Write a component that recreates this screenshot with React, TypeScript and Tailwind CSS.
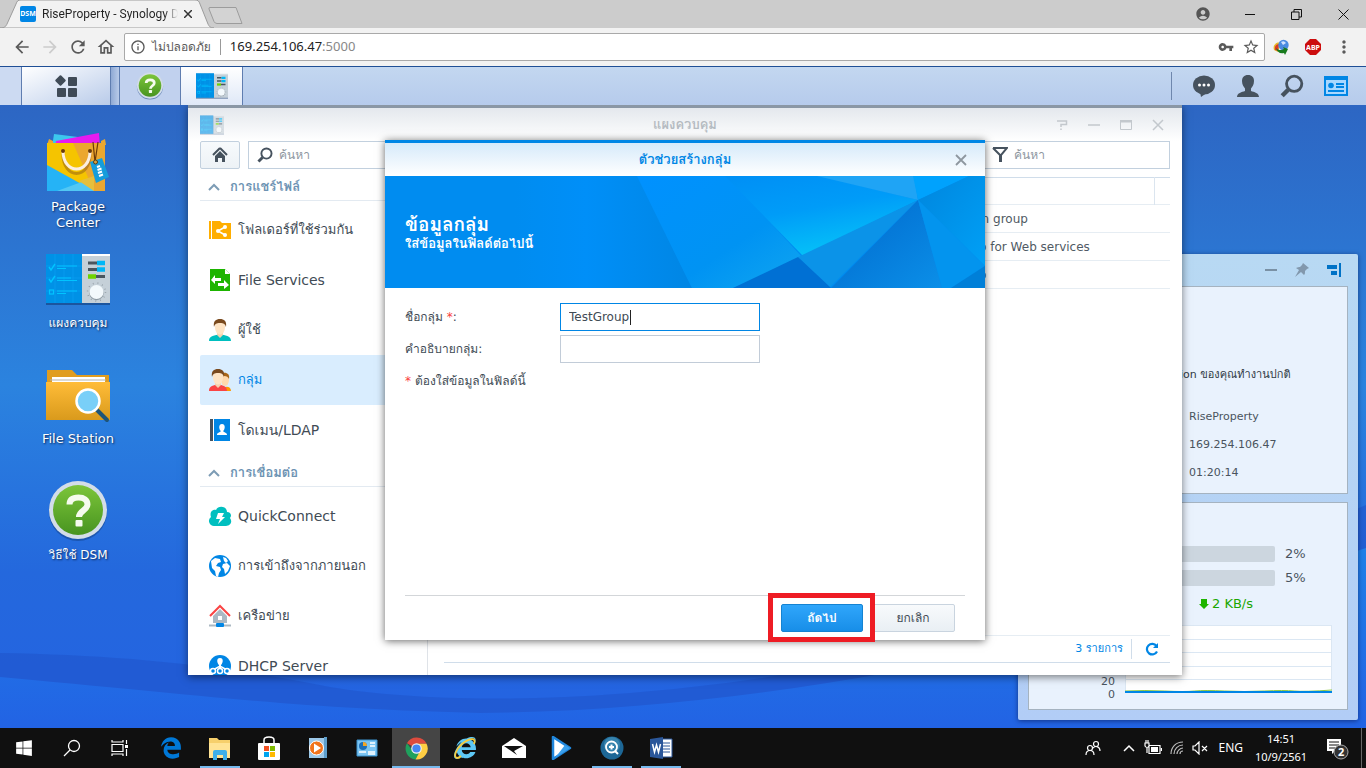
import type { ReactNode } from 'react'
import { FaEdgeLegacy, FaInternetExplorer, FaWindows } from 'react-icons/fa'
import {
  MdAccountCircle,
  MdArrowBack,
  MdArrowForward,
  MdInfoOutline,
  MdMoreVert,
  MdOutlineHome,
  MdRefresh,
  MdStarBorder,
  MdVpnKey,
} from 'react-icons/md'

/* ---------- shared drawings ---------- */

function ControlPanelIcon({ className }: { className: string }) {
  return (
    <svg viewBox="0 0 64 51" className={className} aria-hidden>
      <rect y="1" width="64" height="50" fill="#0b2f66" opacity="0.5" />
      <rect width="36" height="49" fill="#0091e6" />
      <path d="M9 0v49M18 0v49M27 0v49M0 12h36M0 24h36M0 37h36" stroke="#0aa3f5" strokeWidth="0.6" />
      <rect x="36" width="28" height="49" fill="#c5d0d8" />
      <rect x="36" width="28" height="2" fill="#fff" />
      <path d="M3 13l2 3 4-6M3 25l2 3 4-6" stroke="#00c4ff" strokeWidth="1.4" fill="none" />
      <rect x="3.500" y="36" width="4" height="4" stroke="#00c4ff" strokeWidth="1.2" fill="none" />
      <path d="M11 12h20M11 14.500h9M11 24h14M11 26.500h20M11 37h20M11 39.500h9" stroke="#00c4ff" strokeWidth="1.1" />
      <path d="M42 9h9M42 15.500h9M50 22.500h9" stroke="#4b565f" strokeWidth="3" />
      <path d="M51 9h8M51 15.500h8" stroke="#00b7f7" strokeWidth="4.500" />
      <path d="M42 22.500h8" stroke="#6fd300" strokeWidth="4.500" />
      <circle cx="50.500" cy="38" r="9" fill="none" stroke="#909ba3" strokeWidth="1.500" strokeDasharray="0.8 4" />
      <circle cx="50.500" cy="39" r="7.200" fill="#8d99a2" />
      <circle cx="50.500" cy="38" r="7" fill="#f3f9fc" />
    </svg>
  )
}

function HelpIcon({ className }: { className: string }) {
  return (
    <svg viewBox="0 0 60 62" className={className} aria-hidden>
      <defs>
        <linearGradient id="help-green" x1="0" y1="0" x2="0" y2="1">
          <stop offset="0" stopColor="#7cc53a" />
          <stop offset="1" stopColor="#489420" />
        </linearGradient>
      </defs>
      <circle cx="30" cy="32" r="29" fill="#123f86" opacity="0.5" />
      <circle cx="30" cy="30" r="29" fill="#d3dde8" />
      <circle cx="30" cy="30" r="25" fill="url(#help-green)" />
      <path d="M21.500 24.500c0-5 3.500-7 9-7s9 2.500 9 7c0 6-8.500 6-8.500 12.500" fill="none" stroke="#f6fbee" strokeWidth="6" />
      <rect x="27.500" y="40" width="7" height="6.500" rx="1" fill="#f6fbee" />
    </svg>
  )
}

function PackageCenterIcon() {
  return (
    <svg viewBox="0 0 62 60" className="h-[60px] w-[62px]" aria-hidden>
      <path d="M7 1l24 3v10H5z" fill="#3cc8ee" />
      <path d="M9 8l43-8 1 14H8z" fill="#e61af0" />
      <path d="M2 6l4 2v4H0zM58 6l-4 2v4h5z" fill="#e9a832" />
      <rect y="10" width="58" height="48" fill="#f5c400" />
      <path d="M26 10h32v48H47z" fill="#eba72f" />
      <path d="M0 32l47 26H0z" fill="#25b3f6" />
      <path d="M10 58l30-11 7 11z" fill="#52c8f4" />
      <path d="M32 48l15-5v15z" fill="#e6bf3c" />
      <path d="M16 18c0 26 27 26 27 0" fill="none" stroke="#8b5a16" strokeWidth="3" opacity="0.5" transform="translate(0 3)" />
      <path d="M16 18c0 24 27 24 27 0" fill="none" stroke="#fbeee0" strokeWidth="3" />
      <circle cx="16" cy="18" r="2" fill="#6b3a08" />
      <circle cx="43" cy="18" r="2" fill="#6b3a08" />
      <path d="M46 9l2 20 3-20" fill="none" stroke="#6b3a08" strokeWidth="1.200" />
      <path d="M43 29l12-4 7 19-13 6z" fill="#159ddb" />
      <circle cx="48.500" cy="29" r="2" fill="#d7a33f" stroke="#5c3a10" />
      <path d="M50 34l3-1M50.500 37l4-1.500M51 40l4-1.500M52 43l4-1.500" stroke="#fff" strokeWidth="2" />
    </svg>
  )
}

function FileStationIcon() {
  return (
    <svg viewBox="0 0 64 54" className="mt-1 h-[54px] w-[64px]" aria-hidden>
      <defs>
        <linearGradient id="folder" x1="0" y1="0" x2="0" y2="1">
          <stop offset="0" stopColor="#ffbc38" />
          <stop offset="1" stopColor="#d99a1c" />
        </linearGradient>
      </defs>
      <path d="M1 0h25l5 5h32v20H1z" fill="#e09d20" />
      <rect x="6" y="7" width="53" height="8" fill="#fff" />
      <path d="M4 10h56" stroke="#b7b3aa" />
      <rect y="12" width="64" height="38" fill="url(#folder)" />
      <path d="M50 39l11 11" stroke="#1f5577" strokeWidth="4" strokeLinecap="round" />
      <circle cx="42" cy="31" r="11.500" fill="#79cff8" stroke="#fff" strokeWidth="2.500" />
    </svg>
  )
}

function Magnifier({ className }: { className: string }) {
  return (
    <svg viewBox="0 0 22 22" className={className} fill="none" stroke="currentColor" aria-hidden>
      <circle cx="13" cy="9" r="7" strokeWidth="2.600" />
      <path d="M7.500 14.500L2 20" strokeWidth="4" />
    </svg>
  )
}

function ChevronUp() {
  return (
    <svg viewBox="0 0 12 8" className="h-2 w-3" fill="none" stroke="#7d9cb5" strokeWidth="2" aria-hidden>
      <path d="M1 7l5-5 5 5" />
    </svg>
  )
}

/* ---------- browser ---------- */

function Browser() {
  return (
    <header className="shrink-0 font-['Noto_Sans','Waree','Loma','Noto_Sans_Thai_Looped','Noto_Sans_Thai',sans-serif]">
      <div className="flex h-7 bg-[#ccc]">
        <div className="relative flex h-7 w-[214px] items-center gap-[6px] pl-5 pr-[18px]">
          <svg viewBox="0 0 214 28" className="absolute inset-0 h-7 w-[214px]" aria-hidden>
            <path d="M0 28C5 28 6 26 7 24L16 4c1-3 2-4 5-4h174c3 0 4 1 5 4l8 20c1 2 2 4 6 4z" fill="#f2f2f2" stroke="#9c9c9c" />
          </svg>
          <span className="relative flex h-4 w-4 items-center justify-center rounded-xs bg-[#0086e6] text-[7px] font-bold text-white">DSM</span>
          <span className="relative w-[136px] overflow-hidden whitespace-nowrap bg-gradient-to-r from-[#222] from-90% to-transparent bg-clip-text font-['Roboto',sans-serif] text-xs text-transparent">
            RiseProperty - Synology D
          </span>
          <button className="relative" aria-label="Close tab">
            <svg viewBox="0 0 8 8" className="h-2 w-2" stroke="#333" strokeWidth="1.500"><path d="M0 0l8 8M8 0l-8 8" /></svg>
          </button>
        </div>
        <button aria-label="New tab" className="mt-[7px] ml-[-6px] h-[17px]">
          <svg viewBox="0 0 36 18" className="h-[18px] w-9"><path d="M2 .5h26l6 16H9q-2 0-3-2L1 2Q.5.500 2 .5z" fill="#d3d3d3" stroke="#9c9c9c" /></svg>
        </button>
        <div className="ml-auto flex items-center pr-[17px] text-[#111]">
          <MdAccountCircle className="mr-[34px] h-4 w-4 text-[#555]" />
          <button aria-label="Minimize" className="mr-9 flex h-[11px] w-[10px] items-center"><span className="h-px w-full bg-[#111]" /></button>
          <button aria-label="Restore" className="mr-9">
            <svg viewBox="0 0 11 11" className="h-[11px] w-[11px]" fill="none" stroke="currentColor"><path d="M.5 3h7.500v7.500H.5zM3 3V.5h7.500V8H8" /></svg>
          </button>
          <button aria-label="Close">
            <svg viewBox="0 0 11 11" className="h-[11px] w-[11px]" fill="none" stroke="currentColor"><path d="M.5.5l10 10M10.500.5l-10 10" /></svg>
          </button>
        </div>
      </div>
      <div className="flex h-[38px] items-center bg-[#f2f2f2] pl-3 pr-3 text-[#5a5a5a]">
        <button aria-label="Back" className="mr-2"><MdArrowBack className="h-5 w-5" /></button>
        <button aria-label="Forward" className="mr-2 text-[#ccc]"><MdArrowForward className="h-5 w-5" /></button>
        <button aria-label="Reload" className="mr-2"><MdRefresh className="h-5 w-5" /></button>
        <button aria-label="Home" className="mr-2"><MdOutlineHome className="h-5 w-5" /></button>
        <div className="flex h-7 flex-1 items-center rounded-xs border border-[#a9a9a9] bg-white px-[5px]">
          <MdInfoOutline className="mr-[6px] h-4 w-4" />
          <span className="text-xs">ไม่ปลอดภัย</span>
          <span className="mx-[9px] h-4 w-px bg-[#999]" />
          <span className="flex-1 text-[13px] text-[#888]"><span className="text-[#222]">169.254.106.47</span>:5000</span>
          <MdVpnKey className="mr-2 h-4 w-4" />
          <MdStarBorder className="-mr-px h-[18px] w-[18px]" />
        </div>
        <svg viewBox="0 0 16 16" className="ml-2 h-4 w-4" aria-hidden>
          <path d="M1 11C-1 5 5 2 8 4l-3 9z" fill="#e8b82a" />
          <path d="M2 11c-1-4 2-6 4-6L5 12z" fill="#d93a28" />
          <circle cx="10.500" cy="6" r="5.200" fill="#4a8be0" />
          <path d="M8 3c3-2 4 0 5 1l-3 2z" fill="#cfe2ff" />
          <path d="M3 9c3 3 6 2 8 1l-1-2 5 2-3 6-1-2c-4 1-7-1-8-5z" fill="#177a1c" />
        </svg>
        <svg viewBox="0 0 16 16" className="ml-4 h-4 w-4" aria-hidden>
          <path d="M5 0h6l5 5v6l-5 5H5l-5-5V5z" fill="#cc0d0d" />
          <text x="8" y="10.500" fontSize="7" fontWeight="bold" fill="#fff" textAnchor="middle">ABP</text>
        </svg>
        <button aria-label="Menu" className="ml-[13px]"><MdMoreVert className="h-5 w-5" /></button>
      </div>
    </header>
  )
}

/* ---------- DSM top bar ---------- */

function TopBar() {
  return (
    <nav className="flex h-[39px] shrink-0 items-stretch border-t border-[#1f4f96] bg-gradient-to-b from-[#c3d7f0] to-[#b6cbec] text-[#46525e]">
      <div className="w-[21px] bg-[#ccdaf2]" />
      <button aria-label="Main menu" className="flex w-[90px] items-center justify-center border-x border-[#5f7db0] bg-gradient-to-br from-white to-[#b9cbe9]">
        <svg viewBox="0 0 24 24" className="h-6 w-6" fill="#404b57">
          <rect x="2.500" y="2.500" width="8" height="8" rx="1" transform="rotate(45 6.500 6.500)" />
          <rect x="14" y="3" width="9" height="9" rx="1" />
          <rect x="3" y="14" width="9" height="9" rx="1" />
          <rect x="14" y="14" width="9" height="9" rx="1" />
        </svg>
      </button>
      <div className="w-2 bg-gradient-to-r from-[#8fa9d4] to-[#b9cbe9]" />
      <button aria-label="DSM Help" className="flex w-[62px] items-center justify-center border-x border-[#5f7db0] bg-[#c1d1ee]">
        <HelpIcon className="h-7 w-7" />
      </button>
      <button aria-label="แผงควบคุม" className="flex w-[62px] items-center justify-center border-r border-[#5f7db0] bg-gradient-to-b from-white to-[#dfe8f7]">
        <ControlPanelIcon className="h-[26px] w-8" />
      </button>
      <div className="ml-auto flex items-center gap-5 pr-[18px]">
        <span className="h-7 w-px bg-[#6f87ad]" />
        <button aria-label="Notifications">
          <svg viewBox="0 0 24 24" className="h-6 w-6" fill="#46525e">
            <ellipse cx="12" cy="11" rx="11" ry="9.500" />
            <path d="M8 18h8l-7 5z" />
            <g fill="#fff"><circle cx="7.500" cy="11" r="1.500" /><circle cx="12" cy="11" r="1.500" /><circle cx="16.500" cy="11" r="1.500" /></g>
          </svg>
        </button>
        <button aria-label="Options">
          <svg viewBox="0 0 24 24" className="h-6 w-6" fill="#46525e"><path d="M12 1c4 0 6 2.500 6 6 0 4-2 6-3 7.500V17c3 1 8 2 8 6H1c0-4 5-5 8-6v-2.500C8 13 6 11 6 7c0-3.500 2-6 6-6z" /></svg>
        </button>
        <button aria-label="Search"><Magnifier className="h-6 w-6" /></button>
        <button aria-label="Widgets">
          <svg viewBox="0 0 24 24" className="h-6 w-6">
            <path d="M1 3h22v18H1z" fill="#a9d8ff" stroke="#0086e5" strokeWidth="2" />
            <path d="M0 2h24v4H0z" fill="#0086e5" />
            <circle cx="7" cy="11.500" r="2.800" fill="#0086e5" />
            <path d="M12 10h8M12 13h8M4 17h16" stroke="#0086e5" strokeWidth="1.800" />
          </svg>
        </button>
      </div>
    </nav>
  )
}

/* ---------- desktop ---------- */

function Shortcut({ icon, label, latin }: { icon: ReactNode; label: string; latin?: boolean }) {
  return (
    <button className="flex h-[116px] w-24 flex-col items-center text-white [text-shadow:1px_1px_2px_#0b2550]">
      <span className="flex h-16 items-center">{icon}</span>
      <span className={`mt-1 whitespace-pre-line text-center leading-4 ${latin ? 'text-[13px]' : 'text-xs leading-4'}`}>{label}</span>
    </button>
  )
}

function Wallpaper() {
  return (
    <svg viewBox="0 0 1366 623" preserveAspectRatio="none" className="absolute inset-0 h-full w-full" aria-hidden>
      <defs>
        <linearGradient id="sky" x1="0" y1="0" x2="0" y2="1">
          <stop offset="0" stopColor="#2d66c3" />
          <stop offset="0.450" stopColor="#2b83df" />
          <stop offset="0.750" stopColor="#2468dd" />
          <stop offset="1" stopColor="#2463e2" />
        </linearGradient>
        <linearGradient id="wave2" x1="0" y1="0" x2="0" y2="1">
          <stop offset="0" stopColor="#2080e8" />
          <stop offset="1" stopColor="#2263e4" />
        </linearGradient>
      </defs>
      <rect width="1366" height="623" fill="url(#sky)" />
      <path d="M0 548C120 550 220 560 330 582C500 610 900 600 1366 400V623H0z" fill="#1f55cc" opacity="0.600" />
      <path d="M0 572C200 590 300 604 480 608C800 605 1100 530 1366 443V623H0z" fill="url(#wave2)" />
    </svg>
  )
}

/* ---------- control panel window ---------- */

type Item = { label: string; icon: ReactNode; active?: boolean; latin?: boolean }

const sharing: Item[] = [
  {
    label: 'โฟลเดอร์ที่ใช้ร่วมกัน',
    icon: <><path d="M1 3h2v18H1zM4 3h8l2 2h9v16H4z" fill="#ffae00" /><path d="M17 9l-7 4 7 4" stroke="#fff" fill="none" strokeWidth="1.500" /><g fill="#fff"><circle cx="17" cy="9" r="2" /><circle cx="10" cy="13" r="2" /><circle cx="17" cy="17" r="2" /></g></>,
  },
  {
    label: 'File Services',
    latin: true,
    icon: <><path d="M2 1h15l5 5v17H2z" fill="#1db400" /><path d="M17 1v5h5z" fill="#fff" /><path d="M13 10H7V7l-4 5 4 4v-3h6zM10 15h6v-3l5 5-5 4v-3h-6z" fill="#fff" /></>,
  },
  {
    label: 'ผู้ใช้',
    icon: <><path d="M1 23c0-6 6-5 11-7 5 2 11 1 11 7z" fill="#00bfbf" /><path d="M9 13h6v4l-3 3-3-3z" fill="#f5d4b0" /><ellipse cx="12" cy="9.500" rx="5" ry="7" fill="#ffe4c4" /><path d="M6 9C5 3 8 1 12 1s7 2 6 8c-1-3-2-4-6-4S7 6 6 9z" fill="#7a4a1e" /></>,
  },
  {
    label: 'กลุ่ม',
    active: true,
    icon: <><path d="M13 23c3-6 10-5 10 0z" fill="#ff9800" /><ellipse cx="17" cy="12" rx="4" ry="6" fill="#ffd9ad" /><path d="M14 5c5-1 8 1 7 6-1-2-2-3-5-3z" fill="#a86518" /><path d="M1 23c0-6 5-5 9-7 4 2 9 1 9 7z" fill="#fa4444" /><path d="M7 13h6v4l-3 3-3-3z" fill="#f5d4b0" /><ellipse cx="10" cy="9.500" rx="5" ry="7" fill="#ffe4c4" /><path d="M4 9C3 3 6 1 10 1s7 2 6 8c-1-3-2-4-6-4S5 6 4 9z" fill="#7a4a1e" /></>,
  },
  {
    label: 'โดเมน/LDAP',
    latin: true,
    icon: <><path d="M2 1h3v22H2z" fill="#46525e" /><path d="M6 1h16v22H6z" fill="#0086e5" /><path d="M14 6c4 0 3 6 1 7 1 2 4 1 4 4H9c0-3 3-2 4-4-2-1-3-7 1-7z" fill="#fff" /></>,
  },
]

const connectivity: Item[] = [
  {
    label: 'QuickConnect',
    latin: true,
    icon: <><path d="M6 22a5 5 0 01-3-9C1 7 6 5 8 6c2-5 11-4 11 2 4 0 5 4 3 6 3 4 0 8-4 8z" fill="#00bfbf" /><path d="M10 9h6l-2 4h3l-7 7 2-5H8z" fill="#fff" /></>,
  },
  {
    label: 'การเข้าถึงจากภายนอก',
    icon: <><circle cx="12" cy="12" r="11" fill="#0086e5" /><path d="M3 7l4-3 5 1 1 3-3 1-2 3 4 1 1 3-2 3-1 4-2-1-1-5-3-3zM15 3l3 1 2 3-2 2-2-2zM15 10l4-1 3 3-2 5-3 3-1-5-2-2z" fill="#fff" /></>,
  },
  {
    label: 'เครือข่าย',
    icon: <><path d="M5 12l7-7 7 7v7H5z" fill="#abb8c3" /><path d="M10 12h4v4h-4z" fill="#fff" /><path d="M2 12L12 2l10 10" stroke="#fa4444" strokeWidth="2" fill="none" /><path d="M1 21.500h22" stroke="#abb8c3" strokeWidth="2" /><rect x="8" y="19" width="8" height="4" rx="1" fill="#0086e5" /></>,
  },
  {
    label: 'DHCP Server',
    latin: true,
    icon: <><circle cx="12" cy="12" r="11" fill="#0086e5" /><path d="M12 4c4 0 3 5 1 7v4h-2v-4c-2-2-3-7 1-7z" fill="#fff" /><path d="M5 16l7-4 7 4" stroke="#fff" fill="none" strokeWidth="1.500" /><g fill="#0086e5" stroke="#fff" strokeWidth="1.500"><circle cx="5" cy="17" r="2.500" /><circle cx="12" cy="17" r="2.500" /><circle cx="19" cy="17" r="2.500" /></g></>,
  },
]

function Section({ title, items }: { title: string; items: Item[] }) {
  return (
    <section>
      <button className="mb-1 flex h-8 w-full items-center gap-[10px] border-b border-[#e3eaf1] pt-1 pl-2 text-[13px] font-bold text-[#6d93b3]">
        <ChevronUp />
        {title}
      </button>
      <ul>
        {items.map((item) => (
          <li key={item.label}>
            <a
              href="#"
              className={`flex h-[50px] items-center gap-[6px] rounded-xs pl-2 whitespace-nowrap ${item.latin ? 'text-sm' : 'text-[13px]'} ${item.active ? 'bg-[#d9edfe] text-[#0086e5]' : 'text-[#414b55]'}`}
            >
              <svg viewBox="0 0 24 24" className="h-6 w-6 shrink-0" aria-hidden>{item.icon}</svg>
              {item.label}
            </a>
          </li>
        ))}
      </ul>
    </section>
  )
}

const groups = [
  ['administrators', 'System default admin group'],
  ['http', 'System default group for Web services'],
  ['users', 'System default group'],
]

function ControlPanel() {
  return (
    <section className="absolute top-0 right-[184px] bottom-[53px] left-[188px] border-t-[3px] border-[#8a97a5] bg-white shadow-[0_2px_8px_rgba(0,0,0,0.5)]">
      <div className="flex h-full flex-col">
        <div className="flex h-[33px] shrink-0 items-center bg-gradient-to-b from-[#e4e8ed] to-white pr-[18px] pl-3 text-[#c3c8cd]">
          <ControlPanelIcon className="h-5 w-6 opacity-60" />
          <h2 className="ml-[90px] flex-1 text-center text-[13px] font-bold text-[#b5bbc1]">แผงควบคุม</h2>
          <div className="flex items-center gap-5">
            <button aria-label="Help"><svg viewBox="0 0 12 12" className="h-3 w-3" fill="none" stroke="currentColor" strokeWidth="1.500"><path d="M1 2h9.500v3.500H5V8M5 9.500V11" /></svg></button>
            <button aria-label="Minimize"><svg viewBox="0 0 12 12" className="h-3 w-3" stroke="currentColor" strokeWidth="1.500"><path d="M0 6h12" /></svg></button>
            <button aria-label="Maximize"><svg viewBox="0 0 12 12" className="h-3 w-3" fill="none" stroke="currentColor"><path d="M.5 1.500h11v9H.5zM0 3h12" /><path d="M0 2h12" strokeWidth="2" /></svg></button>
            <button aria-label="Close"><svg viewBox="0 0 12 12" className="h-3 w-3" stroke="currentColor" strokeWidth="1.500"><path d="M1 1l10 10M11 1L1 11" /></svg></button>
          </div>
        </div>

        <div className="flex min-h-0 flex-1">
          <aside className="w-60 shrink-0 overflow-hidden border-r border-[#dfe3e8] pl-3 pr-3">
            <div className="flex gap-2">
              <button aria-label="Home" className="flex h-7 w-10 items-center justify-center rounded-xs border border-[#c2d0de] bg-gradient-to-b from-[#f7fafc] to-[#edf2f6]">
                <svg viewBox="0 0 16 16" className="h-4 w-4"><path d="M8 1L1 8M8 1l7 7" stroke="#46525e" strokeWidth="2" /><path d="M8 4l5 5v6h-3v-4H6v4H3V9z" fill="#46525e" /></svg>
              </button>
              <label className="flex h-7 min-w-0 flex-1 items-center gap-[6px] border border-[#c2d0de] pl-2 text-[#46525e]">
                <Magnifier className="h-4 w-4 shrink-0" />
                <input aria-label="ค้นหา" placeholder="ค้นหา" className="w-full min-w-0 text-xs outline-none placeholder:text-[#8e979f]" />
              </label>
            </div>
            <Section title="การแชร์ไฟล์" items={sharing} />
            <Section title="การเชื่อมต่อ" items={connectivity} />
          </aside>

          <div className="flex min-w-0 flex-1 flex-col pr-3 pb-3 pl-4">
            <label className="ml-auto flex h-7 w-[190px] items-center gap-[6px] border border-[#c2d0de] pl-[11px] text-[#46525e]">
              <svg viewBox="0 0 16 16" className="h-4 w-4 shrink-0" fill="none" stroke="currentColor" strokeWidth="2"><path d="M1 1h14L9 8v7M1 1l7 7v7" /></svg>
              <input aria-label="Filter" placeholder="ค้นหา" className="w-full min-w-0 text-xs outline-none placeholder:text-[#8e979f]" />
            </label>
            <table className="mt-2 w-full border-t border-[#d0ddea] text-left text-xs text-[#505a64]">
              <thead>
                <tr className="h-[27px] border-b border-[#e6edf3] text-[#0086e5]">
                  <th className="w-[413px] pl-2 font-normal">ชื่อ</th>
                  <th className="border-r border-[#dbe5ef] font-normal">คำอธิบาย</th>
                  <th className="w-4" aria-label="Columns" />
                </tr>
              </thead>
              <tbody>
                {groups.map(([name, description]) => (
                  <tr key={name} className="h-7 border-b border-[#e6edf3]">
                    <td className="pl-2">{name}</td>
                    <td colSpan={2} className="whitespace-nowrap">{description}</td>
                  </tr>
                ))}
              </tbody>
            </table>
            <div className="mt-auto flex h-7 items-center justify-end border-t border-b border-t-[#e6edf3] border-b-[#d0ddea] pr-[6px] text-[11px] text-[#0086e5]">
              <span>3 รายการ</span>
              <span className="mx-2 h-5 w-px bg-[#d0ddea]" />
              <button aria-label="Refresh" className="mx-1">
                <svg viewBox="0 0 14 14" className="mx-[1px] h-[14px] w-[14px]" fill="none" stroke="currentColor" strokeWidth="2.200"><path d="M12 9.500a5.300 5.300 0 11-.5-5.500" /><path d="M13 1v5H8z" fill="currentColor" stroke="none" /></svg>
              </button>
            </div>
          </div>
        </div>
      </div>
      <GroupWizard />
    </section>
  )
}

/* ---------- wizard ---------- */

function Banner() {
  return (
    <svg viewBox="0 0 600 112" preserveAspectRatio="none" className="absolute inset-0 h-full w-full" aria-hidden>
      <defs>
        <linearGradient id="b1" x1="0" y1="0" x2="1" y2="1">
          <stop offset="0" stopColor="#0091ff" />
          <stop offset="0.600" stopColor="#0093f3" />
          <stop offset="1" stopColor="#10a6ef" />
        </linearGradient>
        <linearGradient id="b2" x1="0" y1="0" x2="0.400" y2="1">
          <stop offset="0" stopColor="#008ff5" />
          <stop offset="0.500" stopColor="#009cf8" />
          <stop offset="1" stopColor="#05c0f8" />
        </linearGradient>
        <linearGradient id="b3" x1="0" y1="0" x2="1" y2="1">
          <stop offset="0" stopColor="#0068cc" />
          <stop offset="1" stopColor="#0b8fe8" />
        </linearGradient>
        <linearGradient id="b4" x1="0" y1="0" x2="1" y2="1">
          <stop offset="0" stopColor="#0086de" />
          <stop offset="1" stopColor="#00a0f6" />
        </linearGradient>
        <linearGradient id="b5" x1="0" y1="0" x2="1" y2="0">
          <stop offset="0" stopColor="#008cf0" />
          <stop offset="0.400" stopColor="#008ff8" />
          <stop offset="1" stopColor="#0086e4" />
        </linearGradient>
      </defs>
      <rect width="600" height="112" fill="#008cf0" />
      <path d="M130 0h122l55 112H130z" fill="url(#b5)" />
      <path d="M252 0h90l76 82-70 30h-41z" fill="url(#b1)" />
      <path d="M340 0h95l98 24-115 56z" fill="url(#b2)" />
      <path d="M432 0h97l4 24z" fill="#1fa4f5" />
      <path d="M528 0h56l-51 24z" fill="#00a2fd" />
      <path d="M584 0h16v90l-67-66z" fill="url(#b4)" />
      <path d="M533 24L413 81l31 31z" fill="#0b93e8" />
      <path d="M348 112l65-31 33 31z" fill="#0070d4" />
      <path d="M533 24l-87 88h111z" fill="url(#b3)" />
      <path d="M533 24l67 66-34 22h-9z" fill="#0394ee" />
      <path d="M600 90v22h-34z" fill="#007fd8" />
    </svg>
  )
}

function GroupWizard() {
  return (
    <form className="absolute top-8 left-1/2 flex h-[500px] w-[600px] -translate-x-1/2 flex-col border-t-[3px] border-[#0086e5] bg-white text-xs text-[#414b55] shadow-[0_1px_8px_rgba(0,0,0,0.6)]">
      <div className="flex h-[33px] items-center bg-gradient-to-b from-[#d6eafa] to-white pr-[18px]">
        <h3 className="ml-[30px] flex-1 text-center text-[13px] font-bold text-[#0086e5]">ตัวช่วยสร้างกลุ่ม</h3>
        <button type="button" aria-label="Close"><svg viewBox="0 0 12 12" className="h-3 w-3" stroke="#8e979f" strokeWidth="1.800"><path d="M1 1l10 10M11 1L1 11" /></svg></button>
      </div>
      <div className="relative flex h-28 flex-col justify-center px-5 pt-1 text-white">
        <Banner />
        <h4 className="relative text-[19px] leading-5 font-bold">ข้อมูลกลุ่ม</h4>
        <p className="relative text-[13px] leading-5 font-bold">ใส่ข้อมูลในฟิลด์ต่อไปนี้</p>
      </div>
      <div className="flex flex-1 flex-col gap-1 px-5 pt-[15px]">
        <div className="flex h-7 items-center">
          <label htmlFor="group-name" className="w-[155px]">ชื่อกลุ่ม <span className="text-[#fa3c3c]">*</span>:</label>
          <div className="relative w-[200px]">
            <input id="group-name" defaultValue="TestGroup" className="h-7 w-full border border-[#0086e5] px-2 outline-none" />
            <span className="absolute top-[7px] left-[70px] h-[15px] w-px bg-[#222]" />
          </div>
        </div>
        <div className="flex h-7 items-center">
          <label htmlFor="group-desc" className="w-[155px]">คำอธิบายกลุ่ม:</label>
          <input id="group-desc" className="h-7 w-[200px] border border-[#c2ccd8] px-2 outline-none" />
        </div>
        <p className="flex h-7 items-center gap-1"><span className="text-[#fa3c3c]">*</span> ต้องใส่ข้อมูลในฟิลด์นี้</p>
      </div>
      <div className="mx-5 flex h-[45px] items-start justify-end gap-2 border-t border-[#d3d6d9] pt-2 pr-[10px]">
        <div className="relative">
          <button type="submit" className="h-7 w-[82px] rounded-xs border border-[#1583d2] bg-gradient-to-b from-[#2fa6fb] to-[#178ee8] font-bold text-white">ถัดไป</button>
          <span className="absolute -top-[11px] -right-3 -bottom-[10px] -left-[13px] border-[5px] border-[#ee1c24]" />
        </div>
        <button type="button" className="h-7 w-[84px] rounded-xs border border-[#c9d4df] bg-gradient-to-b from-[#f8fafc] to-[#e9eff4]">ยกเลิก</button>
      </div>
    </form>
  )
}

/* ---------- widgets ---------- */

function Widgets() {
  return (
    <aside className="absolute right-2 bottom-2 flex w-[340px] flex-col gap-2 rounded-xs bg-gradient-to-b from-[#b8d9f3] to-[#b2cdf6] px-[10px] pb-[10px] text-xs text-[#4a545e] shadow-[0_1px_5px_rgba(0,0,40,0.5)]">
      <div className="-mb-2 flex h-8 items-center justify-end gap-[18px] pr-[7px]">
        <button aria-label="Minimize"><span className="block h-[2px] w-3 bg-[#7a91a5]" /></button>
        <button aria-label="Pin"><svg viewBox="0 0 14 14" className="h-[14px] w-[14px]" fill="#8298ad"><path d="M8 0l6 5-2 1-2 2c0 2 0 3-1 4L6 9l-6 5 4-7-3-2c2-1 3-1 4-1l2-2z" /></svg></button>
        <button aria-label="Dock"><svg viewBox="0 0 14 14" className="h-[14px] w-[14px]" fill="#0072c6"><path d="M0 2h10v4H0zM4 8h6v4H4zM12 0h2v14h-2z" /></svg></button>
      </div>
      <div className="h-52 border border-[#a5b3c0] bg-[#e9f2fd] pt-[81px] pl-[105px] text-[11px]">
        <p className="h-[21px] whitespace-nowrap text-[#303a44]">DiskStation ของคุณทำงานปกติ</p>
        <div className="pt-[14px] pl-[55px] leading-7">
          <p>RiseProperty</p>
          <p>169.254.106.47</p>
          <p>01:20:14</p>
        </div>
      </div>
      <div className="h-52 border border-[#a5b3c0] bg-[#e9f2fd] pt-[39px] pr-[15px] pl-3 text-[13px]">
        {[['CPU', '2%'], ['RAM', '5%']].map(([name, value]) => (
          <div key={name} className="flex h-6 items-center">
            <span className="w-20">{name}</span>
            <div className="h-4 flex-1 rounded-xs bg-[#ccd6df]" />
            <span className="w-[57px] pl-[10px]">{value}</span>
          </div>
        ))}
        <div className="flex h-7 items-center justify-end gap-[3px] pr-[79px] text-[#1aa600]">
          <svg viewBox="0 0 10 10" className="h-[10px] w-[10px]" fill="#1db400"><path d="M2 0h6v5h2l-5 5-5-5h2z" /></svg>
          <span>2 KB/s</span>
        </div>
        <div className="flex gap-[10px] pt-1 pl-[58px] text-[11px] leading-[13px]">
          <div className="flex h-[79px] w-4 flex-col items-end justify-end">
            <span>20</span>
            <span>0</span>
          </div>
          <svg viewBox="0 0 208 68" preserveAspectRatio="none" className="mt-[3px] h-[68px] flex-1">
            <rect x="0.500" y="0.500" width="207" height="67" fill="#fff" stroke="#dbe7f3" />
            <path d="M0 14.500h208M0 27.500h208M0 41.500h208M0 54.500h208" stroke="#dbe7f3" />
            <path d="M0 66q20-1 40 0t30 0 30 0 40 0 30 0 38-1" stroke="#8cc63f" fill="none" />
            <path d="M0 67h208" stroke="#0086e5" strokeWidth="2" />
          </svg>
        </div>
      </div>
    </aside>
  )
}

/* ---------- windows taskbar ---------- */

const apps: { name: string; state?: 'open' | 'focused'; icon: ReactNode }[] = [
  { name: 'Edge', icon: <FaEdgeLegacy className="h-[22px] w-[22px] text-[#0078d7]" /> },
  {
    name: 'File Explorer',
    state: 'open',
    icon: <svg viewBox="0 0 24 24" className="h-6 w-6"><path d="M1 2h8l2 2h11v18H1z" fill="#f6cf6b" /><path d="M1 7h21v15H1z" fill="#ffe394" /><path d="M5 24v-8q0-2 2-2h10q2 0 2 2v8h-4v-5H9v5z" fill="#3daee9" /></svg>,
  },
  {
    name: 'Store',
    icon: <svg viewBox="0 0 24 24" className="h-6 w-6"><path d="M7 8V4q0-3 5-3t5 3v4" fill="none" stroke="#fff" strokeWidth="1.500" /><rect x="1" y="7" width="22" height="17" rx="1" fill="#fff" /><path d="M7 10h5v5H7z" fill="#f25022" /><path d="M13 10h5v5h-5z" fill="#7fba00" /><path d="M7 16h5v5H7z" fill="#00a4ef" /><path d="M13 16h5v5h-5z" fill="#ffb900" /></svg>,
  },
  {
    name: 'Media Player',
    icon: <svg viewBox="0 0 24 24" className="h-6 w-6"><path d="M3 2h16v20H3z" fill="#9cc8e8" /><path d="M18 1h3v21h-3z" fill="#5e9ecb" /><circle cx="10.500" cy="12" r="7" fill="#f1741c" stroke="#fff" /><path d="M8 7.500l7 4.500-7 4.500z" fill="#fff" /></svg>,
  },
  {
    name: 'Control Panel',
    icon: <svg viewBox="0 0 24 24" className="h-6 w-6"><path d="M2 4h20v16H2z" fill="#7cc5f3" stroke="#3a93cf" /><circle cx="8" cy="10" r="4" fill="#1d6fb8" /><path d="M8 10V6A4 4 0 0112 10z" fill="#f5a623" /><path d="M15 7h5M15 10h5M4 16h7M13 16h7M13 18h7" stroke="#fff" strokeWidth="1.500" /></svg>,
  },
  {
    name: 'Chrome',
    state: 'focused',
    icon: <svg viewBox="0 0 24 24" className="h-[23px] w-[23px]"><path d="M12 12L2 6.500A11.500 11.500 0 0122.500 7H12z" fill="#dd4b3e" /><path d="M12 12l-5 1-5-6.500A11.500 11.500 0 0011 23.500l5-9z" fill="#1fa15d" /><path d="M12 7h10.500A11.500 11.500 0 0111 23.500L16 14z" fill="#ffce43" /><circle cx="12" cy="12" r="5.500" fill="#f1f1f1" /><circle cx="12" cy="12" r="4.300" fill="#4587f3" /></svg>,
  },
  {
    name: 'Internet Explorer',
    icon: <span className="relative"><FaInternetExplorer className="h-[22px] w-[22px] text-[#5ec8f5]" /><svg viewBox="0 0 22 22" className="absolute inset-0 h-[22px] w-[22px]" fill="none" stroke="#f7cb3c" strokeWidth="1.800"><path d="M20 7c3-8-6-5-12 0S-1 20 3 21c1 0 3-1 4-2" /></svg></span>,
  },
  {
    name: 'Mail',
    icon: <svg viewBox="0 0 24 24" className="h-6 w-6"><path d="M0 10l12-8 12 8v12H0z" fill="#fff" /><path d="M2 10h19l-9 5 3 4-13-9z" fill="#111" /></svg>,
  },
  {
    name: 'Player',
    icon: <svg viewBox="0 0 24 24" className="h-6 w-6"><path d="M2 1l17 11L2 23z" fill="#fff" stroke="#1f86dc" strokeWidth="2.500" strokeLinejoin="round" /><path d="M4 22l15-10-5-3z" fill="#3ba0ec" /></svg>,
  },
  {
    name: 'Assistant',
    state: 'open',
    icon: <svg viewBox="0 0 24 24" className="h-6 w-6"><circle cx="12" cy="12" r="11.500" fill="#1d6796" /><circle cx="12" cy="9" r="8" fill="#4796bd" opacity="0.600" /><circle cx="11.500" cy="11" r="5.500" fill="none" stroke="#fff" strokeWidth="1.800" /><path d="M15 15l3 3M9 11h5M11.500 8.500v5" stroke="#fff" strokeWidth="2" /></svg>,
  },
  {
    name: 'Word',
    state: 'open',
    icon: <svg viewBox="0 0 24 24" className="h-6 w-6"><path d="M12 3h11v18H12z" fill="#fff" stroke="#2b579a" /><path d="M14 7h7M14 10h7M14 13h7M14 16h7" stroke="#2b579a" /><path d="M1 3l13-2v22L1 21z" fill="#2b579a" /><path d="M3.500 8l2 8 2-7 2 7 2-8" fill="none" stroke="#fff" strokeWidth="1.500" /></svg>,
  },
]

function Taskbar() {
  return (
    <footer className="flex h-10 shrink-0 items-stretch bg-[#101010] font-['Noto_Sans',sans-serif] text-white">
      <button aria-label="Start" className="flex w-12 items-center justify-center"><FaWindows className="h-[18px] w-[18px]" /></button>
      <button aria-label="Search" className="flex w-12 items-center justify-center">
        <svg viewBox="0 0 18 18" className="h-[18px] w-[18px]" fill="none" stroke="#fff" strokeWidth="1.300"><circle cx="11" cy="7" r="5.500" /><path d="M7 11l-6 6" /></svg>
      </button>
      <button aria-label="Task view" className="mr-[3px] flex w-12 items-center justify-center">
        <svg viewBox="0 0 18 18" className="h-[18px] w-[18px]" fill="none" stroke="#fff" strokeWidth="1.200"><path d="M1 5.500h11v7H1zM1 1v2h11V1M1 17v-2h11v2M15.500 1v4M15.500 10v7" /><path d="M14 6h3v3h-3z" fill="#fff" stroke="none" /></svg>
      </button>
      <div className="flex gap-px">
        {apps.map((app) => (
          <button
            key={app.name}
            aria-label={app.name}
            className={`relative flex w-12 items-center justify-center ${app.state === 'focused' ? 'bg-[#454545]' : ''}`}
          >
            {app.icon}
            {app.state ? <span className={`absolute bottom-0 h-[2px] bg-[#76b9ed] ${app.state === 'focused' ? 'inset-x-0' : 'inset-x-1'}`} /> : null}
          </button>
        ))}
      </div>
      <div className="ml-auto flex items-center text-xs">
        <svg viewBox="0 0 16 16" className="mr-[22px] h-4 w-4" fill="none" stroke="#fff" strokeWidth="1.200"><circle cx="11" cy="4" r="2.500" /><circle cx="5" cy="8" r="2.500" /><path d="M1 15c0-6 8-6 8 0M8 8c3-3 7-1 7 3" /></svg>
        <svg viewBox="0 0 12 8" className="mr-[9px] h-2 w-3" fill="none" stroke="#fff" strokeWidth="1.500"><path d="M1 7l5-5 5 5" /></svg>
        <svg viewBox="0 0 18 16" className="mr-2 h-4 w-[18px]" fill="none" stroke="#fff" strokeWidth="1.200"><path d="M5 5.500h11v8H5zM17.500 8v3M3 8v5M1 3h4v3q-2 3-4 0zM2 3V0M4 3V0" /><path d="M7 7h7v5H7z" fill="#fff" stroke="none" /></svg>
        <svg viewBox="0 0 14 14" className="mr-2 h-[14px] w-[14px]" fill="none" stroke="#bbb" strokeWidth="1.200"><path d="M1 13C1 6 6 1 13 1M4 13c0-5 4-9 9-9M7 13c0-3 3-6 6-6M10 13q0-3 3-3" /></svg>
        <svg viewBox="0 0 16 14" className="mr-[10px] h-[14px] w-4" fill="none" stroke="#fff" strokeWidth="1.200"><path d="M1 5h2l4-4v12L3 9H1zM10 5l5 5M15 5l-5 5" /></svg>
        <span className="mr-2">ENG</span>
        <div className="mr-4 w-[60px] text-center text-[11px] leading-[18px] whitespace-nowrap"><p>14:51</p><p>10/9/2561</p></div>
        <button aria-label="Notifications" className="relative mr-3 h-6 w-[22px]">
          <svg viewBox="0 0 22 24" className="h-6 w-[22px]"><path d="M0 3h14v12H8l-3 3v-3H0z" fill="#fff" /><path d="M2 6h10M2 9h10M2 12h6" stroke="#101010" /><circle cx="14" cy="16" r="7" fill="#333" stroke="#aaa" /></svg>
          <span className="absolute top-[8px] left-[11px] text-[11px] leading-4 font-bold">2</span>
        </button>
        <span className="mr-1 h-10 w-px bg-[#666]" />
      </div>
    </footer>
  )
}

export default function App() {
  return (
    <div className="flex h-screen flex-col overflow-hidden font-['DejaVu_Sans','Waree','Loma','Noto_Sans_Thai_Looped','Noto_Sans_Thai',sans-serif]">
      <Browser />
      <TopBar />
      <main className="relative min-h-0 flex-1 overflow-hidden">
        <Wallpaper />
        <div className="relative flex w-fit flex-col pt-[26px] pl-[30px]">
          <Shortcut icon={<PackageCenterIcon />} label={'Package\nCenter'} latin />
          <Shortcut icon={<ControlPanelIcon className="h-[51px] w-16" />} label="แผงควบคุม" />
          <Shortcut icon={<FileStationIcon />} label="File Station" latin />
          <Shortcut icon={<HelpIcon className="h-[62px] w-[60px]" />} label="วิธีใช้ DSM" />
        </div>
        <Widgets />
        <ControlPanel />
      </main>
      <Taskbar />
    </div>
  )
}
